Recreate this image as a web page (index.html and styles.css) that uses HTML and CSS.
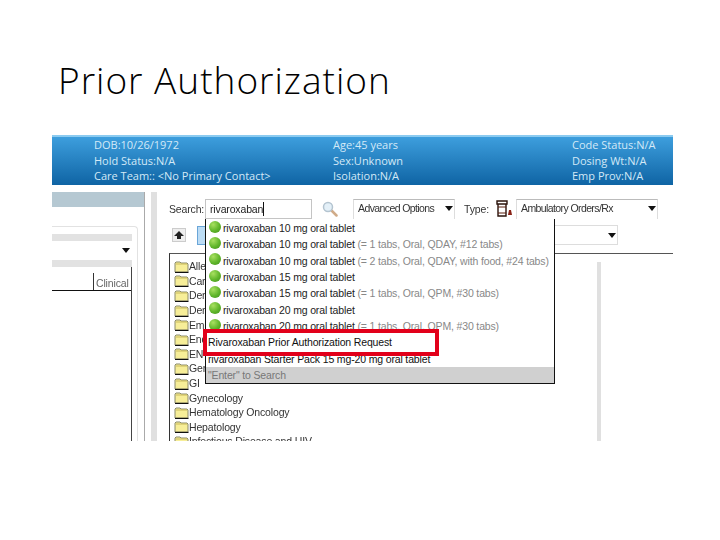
FILE: index.html
```html
<!DOCTYPE html>
<html lang="en">
<head>
<meta charset="utf-8">
<title>Prior Authorization</title>
<link rel="stylesheet" href="styles.css">
</head>
<body>
<svg class="defs" width="0" height="0" aria-hidden="true">
  <symbol id="folder" viewBox="0 0 15 13">
    <path d="M1 12V3l1-1h4l1 1h6l1 1v8z" fill="#f7ee98" stroke="#8a8a6a"/>
    <path d="M1 12.500h13.500" stroke="#111" stroke-width="1.200"/>
    <path d="M2 4h11" stroke="#c9b95a"/>
  </symbol>
</svg>
<main class="slide">
  <h1 class="title">Prior Authorization</h1>
  <section class="shot">
    <header class="banner">
      <div class="banner-col"><span>DOB:10/26/1972</span><span>Hold Status:N/A</span><span>Care Team:: &lt;No Primary Contact&gt;</span></div>
      <div class="banner-col"><span>Age:45 years</span><span>Sex:Unknown</span><span>Isolation:N/A</span></div>
      <div class="banner-col"><span>Code Status:N/A</span><span>Dosing Wt:N/A</span><span>Emp Prov:N/A</span></div>
    </header>
    <div class="workspace">
      <aside class="side">
        <div class="side-bar"></div>
        <div class="side-inner">
          <div class="side-content">
            <div class="side-grey"></div>
            <div class="side-select"><i class="caret"></i></div>
            <div class="side-grey"></div>
            <div class="side-table">
              <div class="side-head"><span class="side-cell"></span><span class="side-cell side-clinical">Clinical I</span></div>
            </div>
          </div>
        </div>
      </aside>
      <div class="splitter"></div>
      <div class="orders">
        <div class="search-row">
          <span class="search-label">Search:</span>
          <div class="search-input">rivaroxaban<i class="cursor"></i></div>
          <svg class="magnifier" width="16" height="16" viewBox="0 0 16 16" aria-hidden="true">
            <path d="M9.500 9.500l5 5" stroke="#d0ab88" stroke-width="2.500" stroke-linecap="round"/>
            <circle cx="6" cy="6" r="4.500" fill="#e4f0f8" stroke="#b4c4d0" stroke-width="1.500"/>
          </svg>
          <div class="select select-advanced">Advanced Options<i class="caret"></i></div>
          <span class="type-label">Type:</span>
          <svg class="rx-icon" width="17" height="18" viewBox="0 0 17 18" aria-hidden="true">
            <path d="M1 1h10v3H1zM2 4h8v12H2z" fill="#fff" stroke="#2a120a" stroke-width="1.400"/>
            <path d="M2 7h8M2 13h8" stroke="#5a2010"/>
            <path d="M12 15l1-5h2l1 5z" fill="#8a2418"/>
          </svg>
          <div class="select select-type">Ambulatory Orders/Rx<i class="caret"></i></div>
        </div>
        <div class="tool-row">
          <span class="tool-up"><svg width="12" height="10" viewBox="0 0 12 10" aria-hidden="true"><path d="M6 1l5 5H8v3H4V6H1z" fill="#222"/></svg></span>
          <span class="tool-blue"></span>
          <div class="select select-folder"><i class="caret"></i></div>
        </div>
        <div class="tree">
          <ul class="tree-list">
            <li class="tree-item"><svg class="folder" aria-hidden="true"><use href="#folder"/></svg>Allergy</li>
            <li class="tree-item"><svg class="folder" aria-hidden="true"><use href="#folder"/></svg>Cardiology</li>
            <li class="tree-item"><svg class="folder" aria-hidden="true"><use href="#folder"/></svg>Dental</li>
            <li class="tree-item"><svg class="folder" aria-hidden="true"><use href="#folder"/></svg>Dermatology</li>
            <li class="tree-item"><svg class="folder" aria-hidden="true"><use href="#folder"/></svg>Emergency</li>
            <li class="tree-item"><svg class="folder" aria-hidden="true"><use href="#folder"/></svg>Endocrine</li>
            <li class="tree-item"><svg class="folder" aria-hidden="true"><use href="#folder"/></svg>ENT</li>
            <li class="tree-item"><svg class="folder" aria-hidden="true"><use href="#folder"/></svg>General</li>
            <li class="tree-item"><svg class="folder" aria-hidden="true"><use href="#folder"/></svg>GI</li>
            <li class="tree-item"><svg class="folder" aria-hidden="true"><use href="#folder"/></svg>Gynecology</li>
            <li class="tree-item"><svg class="folder" aria-hidden="true"><use href="#folder"/></svg>Hematology Oncology</li>
            <li class="tree-item"><svg class="folder" aria-hidden="true"><use href="#folder"/></svg>Hepatology</li>
            <li class="tree-item"><svg class="folder" aria-hidden="true"><use href="#folder"/></svg>Infectious Disease and HIV</li>
          </ul>
          <div class="tree-scroll"></div>
        </div>
      </div>
    </div>
    <div class="suggest">
      <div class="suggest-row"><i class="ball"></i>rivaroxaban 10 mg oral tablet</div>
      <div class="suggest-row"><i class="ball"></i>rivaroxaban 10 mg oral tablet&nbsp;<span class="hint">(= 1 tabs, Oral, QDAY, #12 tabs)</span></div>
      <div class="suggest-row"><i class="ball"></i>rivaroxaban 10 mg oral tablet&nbsp;<span class="hint">(= 2 tabs, Oral, QDAY, with food, #24 tabs)</span></div>
      <div class="suggest-row"><i class="ball"></i>rivaroxaban 15 mg oral tablet</div>
      <div class="suggest-row"><i class="ball"></i>rivaroxaban 15 mg oral tablet&nbsp;<span class="hint">(= 1 tabs, Oral, QPM, #30 tabs)</span></div>
      <div class="suggest-row"><i class="ball"></i>rivaroxaban 20 mg oral tablet</div>
      <div class="suggest-row"><i class="ball"></i>rivaroxaban 20 mg oral tablet&nbsp;<span class="hint">(= 1 tabs, Oral, QPM, #30 tabs)</span></div>
      <div class="suggest-row suggest-plain">Rivaroxaban Prior Authorization Request</div>
      <div class="suggest-row suggest-plain">rivaroxaban Starter Pack 15 mg-20 mg oral tablet</div>
      <div class="suggest-foot">"Enter" to Search</div>
    </div>
    <div class="callout"></div>
  </section>
</main>
</body>
</html>
```
FILE: styles.css
```css
* { box-sizing: border-box; }
html, body { margin: 0; background: #fff; }
body { width: 720px; height: 540px; overflow: hidden; }
.defs { position: absolute; }
.slide { padding: 54px 0 0 52px; }
.title {
  margin: 0 0 0 6px;
  height: 81px;
  font: 300 37px/52px "Open Sans", sans-serif;
  color: #000;
  letter-spacing: 1px;
}
.shot {
  position: relative;
  width: 621px;
  height: 306px;
  overflow: hidden;
  font: 10.500px/14px "Liberation Sans", sans-serif;
  letter-spacing: -0.150px;
  color: #222;
  filter: blur(0.4px);
}
.banner {
  display: grid;
  grid-template-columns: 239px 239px 1fr;
  height: 50px;
  padding: 0 0 0 42px;
  background: linear-gradient(#3d9edd, #0f64a4);
  border-top: 2px solid #8ccbf0;
  color: #d3e9f7;
  font: 11px/15.500px "Open Sans", sans-serif;
  letter-spacing: 0;
}
.banner-col { display: flex; flex-direction: column; white-space: nowrap; }
.workspace { display: flex; height: 256px; padding-top: 7px; }
.side {
  display: flex;
  flex-direction: column;
  width: 93px;
  border-right: 1px solid #aaa;
}
.side-bar { height: 15px; background: #b5c8d2; flex: none; }
.side-inner {
  flex: 1;
  margin: 19px 6px 0 0;
  border-top: 1px solid #e2e2e2;
  border-right: 1px solid #e2e2e2;
  border-top-right-radius: 4px;
  padding: 7px 5px 0 0;
}
.side-content { display: flex; flex-direction: column; height: 100%; }
.side-grey { height: 7px; background: #e2e2e2; flex: none; }
.side-select { display: flex; align-items: center; justify-content: flex-end; height: 19px; padding-right: 2px; flex: none; }
.side-table { flex: 1; padding-top: 6px; border-right: 1px solid #444; }
.side-head { display: flex; height: 18px; border-bottom: 1px solid #111; }
.side-cell { width: 41px; flex: none; }
.side-clinical { flex: 1; padding-left: 2px; border-left: 1px solid #333; color: #666; white-space: nowrap; overflow: hidden; line-height: 20px; }
.caret {
  width: 0; height: 0; flex: none;
  border: 4px solid transparent;
  border-top: 5px solid #111;
  border-bottom: 0;
}
.splitter { width: 6px; margin-left: 6px; background: #e0e0e0; flex: none; }
.orders { flex: 1; display: flex; flex-direction: column; padding: 7px 0 0 12px; min-width: 0; }
.search-row { display: flex; align-items: center; height: 20px; flex: none; }
.search-label { width: 36px; flex: none; color: #333; }
.search-input {
  display: flex; align-items: center;
  width: 107px; height: 20px; padding-left: 4px;
  border: 1px solid #c4c4c4; flex: none; color: #222;
}
.cursor { width: 1px; height: 14px; background: #111; }
.magnifier { margin-left: 10px; flex: none; }
.select {
  display: flex; align-items: center; justify-content: space-between;
  height: 20px; padding: 0 1px 3px 4px;
  border: 1px solid #ddd; border-top-color: #bbb; border-bottom: 0;
  flex: none; color: #333; white-space: nowrap;
  letter-spacing: -0.600px;
}
.select-advanced { width: 102px; margin-left: 15px; }
.type-label { margin-left: 9px; width: 32px; flex: none; color: #333; }
.rx-icon { flex: none; margin-right: 3px; }
.select-type { width: 142px; }
.tool-row { display: flex; align-items: center; height: 20px; margin-top: 6px; flex: none; }
.tool-up {
  display: flex; align-items: center; justify-content: center;
  width: 14px; height: 14px; margin-left: 3px; background: #eee; border: 1px solid #ccc;
  flex: none;
}
.tool-blue { width: 20px; height: 19px; margin-left: 11px; background: #bcdcf5; border: 1px solid #6aa6d8; flex: none; }
.select-folder { width: 398px; margin-left: 3px; border: 1px solid #ddd; justify-content: flex-end; padding-bottom: 0; }
.tree {
  flex: 1;
  display: flex;
  margin-top: 8px;
  border-top: 1px solid #555;
  border-left: 1px solid #333;
  min-height: 0;
  overflow: hidden;
}
.tree-list { flex: 1; list-style: none; margin: 0; padding: 5px 0 0 4px; }
.tree-item { display: flex; align-items: center; height: 14.600px; white-space: nowrap; color: #333; }
.folder { width: 15px; height: 13px; flex: none; }
.tree-scroll { width: 4px; margin: 8px 72px 0 0; background: #e0e0e0; flex: none; }
.suggest {
  position: absolute;
  left: 153px;
  top: 84px;
  display: flex;
  flex-direction: column;
  width: 350px;
  height: 165px;
  padding-top: 1px;
  background: #fff;
  border: 1px solid #111;
  border-top: 0;
  color: #222;
}
.suggest-row {
  display: flex; align-items: center;
  height: 16.330px; padding-left: 3px;
  white-space: pre; flex: none;
}
.suggest-plain { padding-left: 2px; color: #111; }
.ball {
  width: 12px; height: 12px; margin: -3px 2px 0 0;
  border-radius: 50%; flex: none;
  background: radial-gradient(circle at 35% 30%, #a8e060, #5fb52a 55%, #3f8f1a);
}
.hint { color: #888; }
.suggest-foot { flex: 1; background: #d0d0d0; color: #777; padding: 1px 0 0 2px; }
.callout {
  position: absolute;
  left: 151px;
  top: 194px;
  width: 236px;
  height: 27px;
  border: 4px solid #e2001a;
}
```
